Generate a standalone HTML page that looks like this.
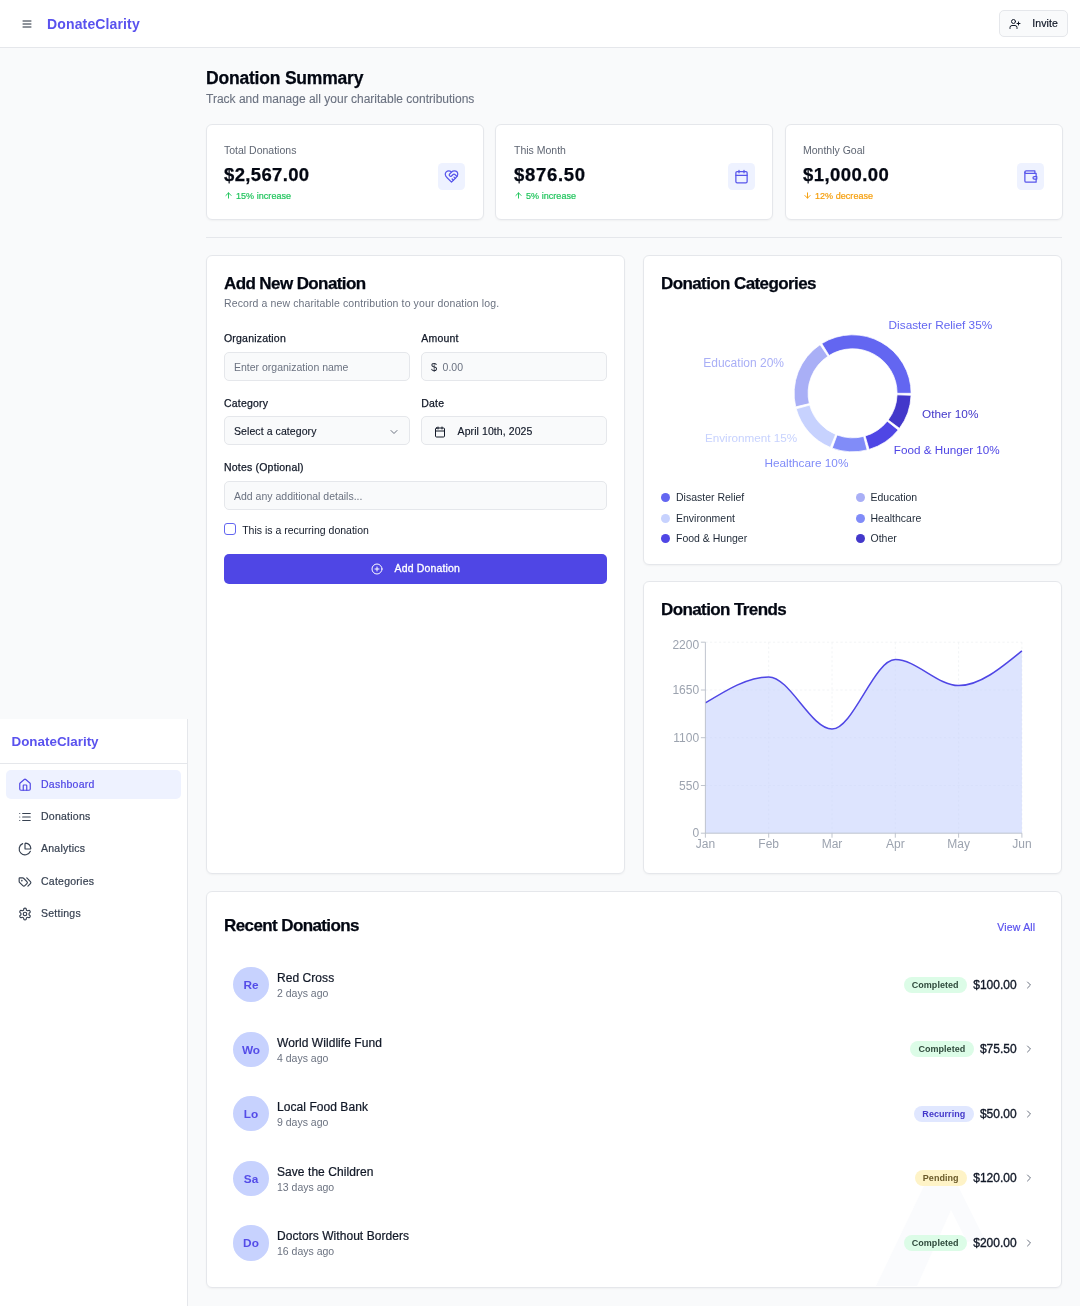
<!DOCTYPE html>
<html lang="en">
<head>
<meta charset="utf-8">
<title>DonateClarity</title>
<style>
*{box-sizing:border-box;margin:0;padding:0}
html,body{width:1080px;height:1306px;overflow:hidden}
body{background:#f9fafb;font-family:"Liberation Sans",sans-serif;color:#111827;position:relative;-webkit-font-smoothing:antialiased}
#root{position:absolute;left:0;top:0;width:1080px;height:1306px;will-change:transform}
svg{display:block}
.abs{position:absolute}
.ico{fill:none;stroke:currentColor;stroke-width:2;stroke-linecap:round;stroke-linejoin:round}

/* header */
#hdr{position:absolute;left:0;top:0;width:1080px;height:48px;background:#fff;border-bottom:1px solid #e5e7eb}
#hdr .menu{position:absolute;left:20.5px;top:17.5px;width:12px;height:12px;color:#1f2937}
#hdr .brand{position:absolute;left:47.1px;top:13px;font-size:14px;font-weight:700;color:#5a52ee;line-height:22px;letter-spacing:0.13px;white-space:nowrap}
#invite{position:absolute;left:999px;top:10px;width:69px;height:27px;border:1px solid #e5e7eb;border-radius:5px;background:#f9fafb;font-size:10.5px;color:#111827}
#invite svg{position:absolute;left:9px;top:6.5px;width:12px;height:12px}
#invite span{position:absolute;left:32.2px;top:6px;line-height:13px;white-space:nowrap;letter-spacing:0.12px;-webkit-text-stroke:0.2px currentColor}

/* sidebar */
#side{position:absolute;left:0;top:719px;width:188px;height:587px;background:#fff;border-right:1px solid #e5e7eb}
#side .brand{position:absolute;left:11.5px;top:12.8px;font-size:13.4px;font-weight:700;color:#5a52ee;line-height:20px;white-space:nowrap}
#side .sep{position:absolute;left:0;top:44px;width:187px;height:1px;background:#e5e7eb}
.nav{position:absolute;left:6px;width:175px;height:29px;border-radius:5px;font-size:10.5px;color:#374151}
.nav svg{position:absolute;left:12px;top:8px;width:14px;height:14px}
.nav span{position:absolute;left:35px;top:8px;line-height:13px;white-space:nowrap;letter-spacing:0.25px;-webkit-text-stroke:0.2px currentColor}
.nav.on{background:#eef2ff;color:#4f46e5}

/* cards */
.card{position:absolute;border:1px solid transparent;z-index:0}
.card::before{content:"";position:absolute;z-index:-1;left:calc(-1px + var(--l,0px));top:calc(-1px + var(--t,0px));right:calc(-1px + var(--r,0px));bottom:calc(-1px + var(--b,0px));background:#fff;border:1px solid #e5e7eb;border-radius:6px;box-shadow:0 1px 2px rgba(0,0,0,.04)}
.h2{position:absolute;left:17px;top:15px;font-size:17px;font-weight:700;line-height:24px;letter-spacing:-0.6px;color:#030712;-webkit-text-stroke:0.25px currentColor;white-space:nowrap}

/* title */
#ttl{position:absolute;left:206px;top:65.5px;font-size:17.5px;font-weight:700;line-height:24px;letter-spacing:-0.2px;color:#030712;-webkit-text-stroke:0.25px currentColor;white-space:nowrap}
#sub{position:absolute;left:206px;top:89.5px;font-size:12px;line-height:18px;color:#6b7280;white-space:nowrap;-webkit-text-stroke:0.12px currentColor}

/* stats */
.stat .l{position:absolute;left:17px;top:17.5px;font-size:10.5px;line-height:14px;color:#5f6673;white-space:nowrap}
.stat .v{position:absolute;left:17px;top:37px;font-size:18.5px;font-weight:700;line-height:26px;letter-spacing:0.35px;color:#030712;-webkit-text-stroke:0.25px currentColor;white-space:nowrap}
.stat .d{position:absolute;left:17px;top:64.5px;font-size:9px;line-height:12px;white-space:nowrap}
.stat .d svg{position:absolute;left:0;top:1.5px;width:9px;height:9px;stroke-width:2.6}
.stat .d span{position:absolute;left:12px;top:0;-webkit-text-stroke:0.2px currentColor;letter-spacing:0.05px}
.stat .ib{position:absolute;right:18px;top:37.7px;width:27px;height:27px;border-radius:4.5px;background:#eef2ff;color:#5856eb}
.stat .ib svg{position:absolute;left:6px;top:6px;width:15px;height:15px}
.up{color:#22c55e}.down{color:#f59e0b}

/* form */
.desc{position:absolute;left:17px;top:39px;font-size:10.5px;line-height:14px;color:#6b7280;white-space:nowrap;letter-spacing:0.115px}
.lab{position:absolute;font-size:10.5px;line-height:14px;color:#111827;white-space:nowrap;letter-spacing:0.2px;-webkit-text-stroke:0.25px currentColor}
.inp{position:absolute;height:29.3px;border:1px solid #e5e7eb;border-radius:5px;background:#f9fafb;font-size:10.5px}
.inp span{position:absolute;top:7.7px;line-height:13px;white-space:nowrap}
.inp .ph{color:#6b7280}
.inp .tx{color:#111827;-webkit-text-stroke:0.15px currentColor;letter-spacing:0.08px}
.inp .dol{left:9.5px;color:#111827;font-size:11px}
.inp .chev{position:absolute;right:9px;top:9px;width:12px;height:12px;color:#6b7280}
.inp .cal{position:absolute;left:12px;top:9px;width:12px;height:12px;color:#111827}
.cb{position:absolute;left:17px;top:266.4px;width:12px;height:12px;border:1px solid #6366f1;border-radius:3px;background:#fff}
.cbl{position:absolute;left:35.2px;top:265.6px;font-size:10.5px;line-height:14px;color:#111827;white-space:nowrap}
.btn{position:absolute;left:17px;top:297.4px;width:383.2px;height:29.6px;border-radius:5px;background:#4f46e5;color:#fff;font-size:10.5px}
.btn svg{position:absolute;left:147px;top:9px;width:12px;height:12px}
.btn span{position:absolute;left:170.5px;top:8px;line-height:13px;white-space:nowrap;letter-spacing:0.15px;-webkit-text-stroke:0.3px currentColor}

/* legend */
.lg{position:absolute;font-size:10.5px;line-height:15px;color:#1f2937;white-space:nowrap;padding-left:15px}
.lg i{position:absolute;left:0;top:3px;width:9px;height:9px;border-radius:50%}
/* recent */
.va{position:absolute;right:25.6px;top:28px;font-size:10.5px;line-height:14px;color:#5a52ee;white-space:nowrap;letter-spacing:0.2px;-webkit-text-stroke:0.2px currentColor}
.row{position:absolute;left:17px;width:820px;height:54px}
.row .av{position:absolute;left:9.4px;top:9.5px;width:35.2px;height:35.2px;border-radius:50%;background:#c7d2fe;color:#544ce8;font-size:11.8px;font-weight:700;line-height:36.8px;text-align:center}
.row .nm{position:absolute;left:53px;top:12.5px;font-size:12px;line-height:16px;color:#111827;white-space:nowrap;letter-spacing:0.06px;-webkit-text-stroke:0.22px currentColor}
.row .ago{position:absolute;left:53px;top:28.6px;font-size:10.5px;line-height:14px;color:#6b7280;white-space:nowrap}
.row .rt{position:absolute;right:9px;top:0;height:54px;display:flex;align-items:center;gap:6.4px}
.row .rt svg{width:12px;height:12px;color:#6b7280}
.bdg{display:inline-block;height:16px;line-height:17.4px;padding:0 8.2px;letter-spacing:0.05px;border-radius:9px;font-size:9px;font-weight:700;white-space:nowrap}
.bdg.c{background:#dcfce7;color:#2f4a3c}
.bdg.r{background:#e0e7ff;color:#4338ca}
.bdg.p{background:#fef3c7;color:#6b5a2a}
.amt{font-size:12px;color:#111827;white-space:nowrap;-webkit-text-stroke:0.35px currentColor}
</style>
</head>
<body>
<div id="root">

<div id="hdr">
  <svg class="menu ico" viewBox="0 0 24 24"><path d="M4 6h16M4 12h16M4 18h16"/></svg>
  <div class="brand">DonateClarity</div>
  <div id="invite">
    <svg class="ico" viewBox="0 0 24 24"><path d="M16 21v-2a4 4 0 0 0-4-4H6a4 4 0 0 0-4 4v2"/><circle cx="9" cy="7" r="4"/><path d="M19 8v6M22 11h-6"/></svg>
    <span>Invite</span>
  </div>
</div>

<div id="ttl">Donation Summary</div>
<div id="sub">Track and manage all your charitable contributions</div>

<!-- stat cards -->
<div class="card stat" style="left:206px;top:124px;width:278px;height:96px">
  <div class="l">Total Donations</div><div class="v">$2,567.00</div>
  <div class="d up"><svg class="ico" viewBox="0 0 24 24"><path d="M12 19V5M5 12l7-7 7 7"/></svg><span>15% increase</span></div>
  <div class="ib"><svg class="ico" viewBox="0 0 24 24"><path d="M19 14c1.49-1.46 3-3.21 3-5.5A5.5 5.5 0 0 0 16.500 3c-1.760 0-3 .5-4.500 2-1.500-1.500-2.740-2-4.500-2A5.500 5.500 0 0 0 2 8.500c0 2.300 1.500 4.050 3 5.500l7 7Z"/><path d="M12 5 9.040 7.960a2.170 2.170 0 0 0 0 3.080c.82.820 2.130.850 3 .070l2.070-1.900a2.820 2.820 0 0 1 3.790 0l2.960 2.660"/><path d="m18 15-2-2"/><path d="m15 18-2-2"/></svg></div>
</div>
<div class="card stat" style="--l:-1px;--r:1px;left:496px;top:124px;width:278px;height:96px">
  <div class="l">This Month</div><div class="v" style="letter-spacing:0.7px">$876.50</div>
  <div class="d up"><svg class="ico" viewBox="0 0 24 24"><path d="M12 19V5M5 12l7-7 7 7"/></svg><span>5% increase</span></div>
  <div class="ib"><svg class="ico" viewBox="0 0 24 24"><path d="M8 2v4M16 2v4"/><rect x="3" y="4" width="18" height="18" rx="2"/><path d="M3 10h18"/></svg></div>
</div>
<div class="card stat" style="left:785px;top:124px;width:278px;height:96px">
  <div class="l">Monthly Goal</div><div class="v" style="letter-spacing:0.45px">$1,000.00</div>
  <div class="d down"><svg class="ico" viewBox="0 0 24 24"><path d="M12 5v14M19 12l-7 7-7-7"/></svg><span>12% decrease</span></div>
  <div class="ib"><svg class="ico" viewBox="0 0 24 24"><path d="M21 12V7H5a2 2 0 0 1 0-4h14v4"/><path d="M3 5v14a2 2 0 0 0 2 2h16v-5"/><path d="M18 12a2 2 0 0 0 0 4h4v-4Z"/></svg></div>
</div>

<div class="abs" style="left:206px;top:237px;width:856px;height:1px;background:#e5e7eb"></div>

<!-- SECTION: form -->
<div class="card" id="form" style="--t:-1px;left:206px;top:256px;width:419.2px;height:617.6px">
  <div class="h2">Add New Donation</div>
  <div class="desc">Record a new charitable contribution to your donation log.</div>

  <div class="lab" style="left:17px;top:73.9px">Organization</div>
  <div class="inp" style="left:17px;top:94.7px;width:185.6px"><span class="ph" style="left:9px;top:8.4px">Enter organization name</span></div>
  <div class="lab" style="left:214.3px;top:73.9px">Amount</div>
  <div class="inp" style="left:213.6px;top:94.7px;width:186.6px"><span class="dol" style="top:8.4px">$</span><span class="ph" style="left:21px;top:8.4px">0.00</span></div>

  <div class="lab" style="left:17px;top:138.6px">Category</div>
  <div class="inp" style="left:17px;top:159.1px;width:185.6px"><span class="tx" style="left:9px">Select a category</span>
    <svg class="ico chev" viewBox="0 0 24 24"><path d="m6 9 6 6 6-6"/></svg></div>
  <div class="lab" style="left:214.3px;top:138.6px">Date</div>
  <div class="inp" style="left:213.6px;top:159.1px;width:186.6px"><svg class="ico cal" viewBox="0 0 24 24"><path d="M8 2v4M16 2v4"/><rect x="3" y="4" width="18" height="18" rx="2"/><path d="M3 10h18"/></svg><span class="tx" style="left:36px">April 10th, 2025</span></div>

  <div class="lab" style="left:17px;top:203.2px">Notes (Optional)</div>
  <div class="inp" style="left:17px;top:224.2px;width:383.2px"><span class="ph" style="left:9px">Add any additional details...</span></div>

  <div class="cb"></div>
  <div class="cbl">This is a recurring donation</div>

  <div class="btn"><svg class="ico" viewBox="0 0 24 24"><circle cx="12" cy="12" r="10"/><path d="M8 12h8M12 8v8"/></svg><span>Add Donation</span></div>
</div>
<!-- SECTION: categories -->
<div class="card" id="cats" style="--t:-1px;--b:-1px;left:643px;top:256px;width:419px;height:308px">
<svg class="abs" style="left:0;top:0" width="417" height="240" viewBox="0 0 417 240" font-size="12">
<path d="M267.10,136.30A58.5,58.5,0,0,0,177.77,86.58L185.15,98.48A44.5,44.5,0,0,1,253.10,136.30Z" fill="#6366f1" stroke="#fff" stroke-width="0.75"/>
<path d="M176.06,87.69A58.5,58.5,0,0,0,151.69,149.86L165.31,146.61A44.5,44.5,0,0,1,183.84,99.32Z" fill="#a9aff6" stroke="#fff" stroke-width="0.75"/>
<path d="M152.20,151.84A58.5,58.5,0,0,0,186.31,190.39L191.64,177.44A44.5,44.5,0,0,1,165.70,148.12Z" fill="#c7d2fe" stroke="#fff" stroke-width="0.75"/>
<path d="M188.21,191.13A58.5,58.5,0,0,0,223.15,192.96L219.67,179.40A44.5,44.5,0,0,1,193.09,178.01Z" fill="#818cf8" stroke="#fff" stroke-width="0.75"/>
<path d="M225.12,192.42A58.5,58.5,0,0,0,254.19,172.96L243.28,164.18A44.5,44.5,0,0,1,221.16,178.99Z" fill="#4f46e5" stroke="#fff" stroke-width="0.75"/>
<path d="M255.44,171.34A58.5,58.5,0,0,0,267.06,138.34L253.07,137.85A44.5,44.5,0,0,1,244.23,162.96Z" fill="#4338ca" stroke="#fff" stroke-width="0.75"/>
<text x="244.6" y="72.4" text-anchor="start" fill="#6366f1" font-size="11.8">Disaster Relief 35%</text>
<text x="140.0" y="109.7" text-anchor="end" fill="#a9aff6" font-size="12">Education 20%</text>
<text x="153.2" y="185.4" text-anchor="end" fill="#c7d2fe" font-size="11.7">Environment 15%</text>
<text x="204.4" y="209.6" text-anchor="end" fill="#818cf8" font-size="11.8">Healthcare 10%</text>
<text x="249.8" y="197.0" text-anchor="start" fill="#4f46e5" font-size="11.7">Food &amp; Hunger 10%</text>
<text x="278.0" y="160.8" text-anchor="start" fill="#4338ca" font-size="11.8">Other 10%</text>
</svg>
  <div class="h2">Donation Categories</div>
  <div class="lg" style="left:17px;top:233px"><i style="background:#6366f1"></i>Disaster Relief</div>
  <div class="lg" style="left:211.5px;top:233px"><i style="background:#a9aff6"></i>Education</div>
  <div class="lg" style="left:17px;top:253.6px"><i style="background:#c7d2fe"></i>Environment</div>
  <div class="lg" style="left:211.5px;top:253.6px"><i style="background:#818cf8"></i>Healthcare</div>
  <div class="lg" style="left:17px;top:274.2px"><i style="background:#4f46e5"></i>Food &amp; Hunger</div>
  <div class="lg" style="left:211.5px;top:274.2px"><i style="background:#4338ca"></i>Other</div>
</div>
<!-- SECTION: trends -->
<div class="card" id="trends" style="--t:-1px;--b:-1px;left:643px;top:582px;width:419px;height:291px">
<svg class="abs" style="left:0;top:0" width="417" height="289" viewBox="0 0 417 289" font-size="12">
<line x1="61.4" x2="377.9" y1="202.5" y2="202.5" stroke="#eef0f3" stroke-dasharray="2.25 2.25" stroke-width="0.75"/>
<line x1="61.4" x2="377.9" y1="154.7" y2="154.7" stroke="#eef0f3" stroke-dasharray="2.25 2.25" stroke-width="0.75"/>
<line x1="61.4" x2="377.9" y1="107.0" y2="107.0" stroke="#eef0f3" stroke-dasharray="2.25 2.25" stroke-width="0.75"/>
<line x1="61.4" x2="377.9" y1="59.2" y2="59.2" stroke="#eef0f3" stroke-dasharray="2.25 2.25" stroke-width="0.75"/>
<line x1="124.7" x2="124.7" y1="59.2" y2="250.2" stroke="#eef0f3" stroke-dasharray="2.25 2.25" stroke-width="0.75"/>
<line x1="188.0" x2="188.0" y1="59.2" y2="250.2" stroke="#eef0f3" stroke-dasharray="2.25 2.25" stroke-width="0.75"/>
<line x1="251.3" x2="251.3" y1="59.2" y2="250.2" stroke="#eef0f3" stroke-dasharray="2.25 2.25" stroke-width="0.75"/>
<line x1="314.6" x2="314.6" y1="59.2" y2="250.2" stroke="#eef0f3" stroke-dasharray="2.25 2.25" stroke-width="0.75"/>
<line x1="377.9" x2="377.9" y1="59.2" y2="250.2" stroke="#eef0f3" stroke-dasharray="2.25 2.25" stroke-width="0.75"/>
<path d="M61.40,119.97C82.50,106.95,103.60,93.93,124.70,93.93C145.80,93.93,166.90,146.02,188.00,146.02C209.10,146.02,230.20,76.56,251.30,76.56C272.40,76.56,293.50,102.61,314.60,102.61C335.70,102.61,356.80,85.25,377.90,67.88L377.90,250.20L61.40,250.20Z" fill="#c7d2fe" fill-opacity="0.6"/>
<path d="M61.40,119.97C82.50,106.95,103.60,93.93,124.70,93.93C145.80,93.93,166.90,146.02,188.00,146.02C209.10,146.02,230.20,76.56,251.30,76.56C272.40,76.56,293.50,102.61,314.60,102.61C335.70,102.61,356.80,85.25,377.90,67.88" fill="none" stroke="#4f46e5" stroke-width="1.5"/>
<line x1="61.4" x2="61.4" y1="59.2" y2="250.2" stroke="#b9bec8" stroke-width="0.9"/>
<line x1="61.4" x2="377.9" y1="250.2" y2="250.2" stroke="#b9bec8" stroke-width="0.9"/>
<line x1="56.9" x2="61.4" y1="250.2" y2="250.2" stroke="#b9bec8" stroke-width="0.9"/>
<text x="55.1" y="254.4" text-anchor="end" fill="#9ca3af">0</text>
<line x1="56.9" x2="61.4" y1="202.5" y2="202.5" stroke="#b9bec8" stroke-width="0.9"/>
<text x="55.1" y="206.7" text-anchor="end" fill="#9ca3af">550</text>
<line x1="56.9" x2="61.4" y1="154.7" y2="154.7" stroke="#b9bec8" stroke-width="0.9"/>
<text x="55.1" y="158.9" text-anchor="end" fill="#9ca3af">1100</text>
<line x1="56.9" x2="61.4" y1="107.0" y2="107.0" stroke="#b9bec8" stroke-width="0.9"/>
<text x="55.1" y="111.2" text-anchor="end" fill="#9ca3af">1650</text>
<line x1="56.9" x2="61.4" y1="59.2" y2="59.2" stroke="#b9bec8" stroke-width="0.9"/>
<text x="55.1" y="65.8" text-anchor="end" fill="#9ca3af">2200</text>
<line x1="61.4" x2="61.4" y1="250.2" y2="254.7" stroke="#b9bec8" stroke-width="0.9"/>
<text x="61.4" y="264.6" text-anchor="middle" fill="#9ca3af">Jan</text>
<line x1="124.7" x2="124.7" y1="250.2" y2="254.7" stroke="#b9bec8" stroke-width="0.9"/>
<text x="124.7" y="264.6" text-anchor="middle" fill="#9ca3af">Feb</text>
<line x1="188.0" x2="188.0" y1="250.2" y2="254.7" stroke="#b9bec8" stroke-width="0.9"/>
<text x="188.0" y="264.6" text-anchor="middle" fill="#9ca3af">Mar</text>
<line x1="251.3" x2="251.3" y1="250.2" y2="254.7" stroke="#b9bec8" stroke-width="0.9"/>
<text x="251.3" y="264.6" text-anchor="middle" fill="#9ca3af">Apr</text>
<line x1="314.6" x2="314.6" y1="250.2" y2="254.7" stroke="#b9bec8" stroke-width="0.9"/>
<text x="314.6" y="264.6" text-anchor="middle" fill="#9ca3af">May</text>
<line x1="377.9" x2="377.9" y1="250.2" y2="254.7" stroke="#b9bec8" stroke-width="0.9"/>
<text x="377.9" y="264.6" text-anchor="middle" fill="#9ca3af">Jun</text>
</svg>
  <div class="h2">Donation Trends</div>
</div>
<!-- SECTION: recent -->
<div class="card" id="recent" style="left:206px;top:891px;width:856px;height:396.5px">
  <svg class="abs" style="left:0;top:0" width="854" height="395" viewBox="0 0 854 395"><path d="M717,294L751,294L777,346L760,350L744,318L710,394L669,394Z" fill="#fafbfd"/></svg>
  <div class="h2" style="top:22.3px">Recent Donations</div>
  <div class="va">View All</div>
  <div class="row" style="top:65.5px">
    <div class="av">Re</div>
    <div class="nm">Red Cross</div><div class="ago">2 days ago</div>
    <div class="rt"><span class="bdg c">Completed</span><span class="amt">$100.00</span><svg class="ico" viewBox="0 0 24 24"><path d="m9 18 6-6-6-6"/></svg></div>
  </div>
  <div class="row" style="top:130.1px">
    <div class="av">Wo</div>
    <div class="nm">World Wildlife Fund</div><div class="ago">4 days ago</div>
    <div class="rt"><span class="bdg c">Completed</span><span class="amt">$75.50</span><svg class="ico" viewBox="0 0 24 24"><path d="m9 18 6-6-6-6"/></svg></div>
  </div>
  <div class="row" style="top:194.7px">
    <div class="av">Lo</div>
    <div class="nm">Local Food Bank</div><div class="ago">9 days ago</div>
    <div class="rt"><span class="bdg r">Recurring</span><span class="amt">$50.00</span><svg class="ico" viewBox="0 0 24 24"><path d="m9 18 6-6-6-6"/></svg></div>
  </div>
  <div class="row" style="top:259.3px">
    <div class="av">Sa</div>
    <div class="nm">Save the Children</div><div class="ago">13 days ago</div>
    <div class="rt"><span class="bdg p">Pending</span><span class="amt">$120.00</span><svg class="ico" viewBox="0 0 24 24"><path d="m9 18 6-6-6-6"/></svg></div>
  </div>
  <div class="row" style="top:323.9px">
    <div class="av">Do</div>
    <div class="nm">Doctors Without Borders</div><div class="ago">16 days ago</div>
    <div class="rt"><span class="bdg c">Completed</span><span class="amt">$200.00</span><svg class="ico" viewBox="0 0 24 24"><path d="m9 18 6-6-6-6"/></svg></div>
  </div>
</div>

<!-- sidebar -->
<div id="side">
  <div class="brand">DonateClarity</div>
  <div class="sep"></div>
  <div class="nav on" style="top:51px"><svg class="ico" viewBox="0 0 24 24"><path d="M15 21v-8a1 1 0 0 0-1-1h-4a1 1 0 0 0-1 1v8"/><path d="M3 10a2 2 0 0 1 .709-1.528l7-5.999a2 2 0 0 1 2.582 0l7 5.999A2 2 0 0 1 21 10v9a2 2 0 0 1-2 2H5a2 2 0 0 1-2-2z"/></svg><span>Dashboard</span></div>
  <div class="nav" style="top:83.3px"><svg class="ico" viewBox="0 0 24 24"><path d="M3 12h.01M3 18h.01M3 6h.01M8 12h13M8 18h13M8 6h13"/></svg><span>Donations</span></div>
  <div class="nav" style="top:115.3px"><svg class="ico" viewBox="0 0 24 24"><path d="M21 12c.552 0 1.005-.449.950-.998a10 10 0 0 0-8.953-8.951c-.550-.055-.998.398-.998.950v8a1 1 0 0 0 1 1z"/><path d="M21.210 15.890A10 10 0 1 1 8 2.830"/></svg><span>Analytics</span></div>
  <div class="nav" style="top:148px"><svg class="ico" viewBox="0 0 24 24"><path d="m15 5 6.300 6.300a2.400 2.400 0 0 1 0 3.400L17 19"/><path d="M9.586 5.586A2 2 0 0 0 8.172 5H3a1 1 0 0 0-1 1v5.172a2 2 0 0 0 .586 1.414L8.290 18.290a2.426 2.426 0 0 0 3.420 0l3.580-3.580a2.426 2.426 0 0 0 0-3.420z"/><circle cx="6.500" cy="9.500" r=".5" fill="currentColor"/></svg><span>Categories</span></div>
  <div class="nav" style="top:180.4px"><svg class="ico" viewBox="0 0 24 24"><path d="M12.220 2h-.440a2 2 0 0 0-2 2v.180a2 2 0 0 1-1 1.730l-.430.250a2 2 0 0 1-2 0l-.150-.080a2 2 0 0 0-2.730.730l-.220.380a2 2 0 0 0 .730 2.730l.150.100a2 2 0 0 1 1 1.720v.510a2 2 0 0 1-1 1.740l-.150.090a2 2 0 0 0-.730 2.730l.220.380a2 2 0 0 0 2.730.730l.150-.080a2 2 0 0 1 2 0l.430.250a2 2 0 0 1 1 1.730V20a2 2 0 0 0 2 2h.440a2 2 0 0 0 2-2v-.180a2 2 0 0 1 1-1.730l.430-.250a2 2 0 0 1 2 0l.150.080a2 2 0 0 0 2.730-.730l.220-.390a2 2 0 0 0-.730-2.730l-.150-.080a2 2 0 0 1-1-1.740v-.500a2 2 0 0 1 1-1.740l.150-.090a2 2 0 0 0 .730-2.730l-.220-.380a2 2 0 0 0-2.730-.730l-.150.080a2 2 0 0 1-2 0l-.430-.250a2 2 0 0 1-1-1.730V4a2 2 0 0 0-2-2z"/><circle cx="12" cy="12" r="3"/></svg><span>Settings</span></div>
</div>

</div>
</body>
</html>
